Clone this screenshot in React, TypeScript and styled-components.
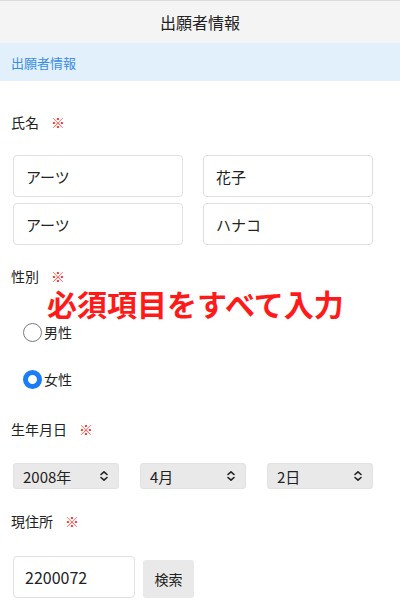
import styled, { createGlobalStyle } from 'styled-components'

// ─── Global ───────────────────────────────────────────────────────────────────

const GlobalStyle = createGlobalStyle`
  * { box-sizing: border-box; }
  body {
    margin: 0;
    background: #fff;
    font-family: "Noto Sans CJK JP", "Noto Sans", "Liberation Sans", sans-serif;
    color: #222;
  }
`

// ─── Parts ────────────────────────────────────────────────────────────────────

function Chevrons() {
  return (
    <svg width="10" height="12" viewBox="0 0 10 12" fill="none">
      <path d="M2 4.5 L5 1.8 L8 4.5" stroke="#222" strokeWidth="1.6" strokeLinecap="round" strokeLinejoin="round" />
      <path d="M2 7.5 L5 10.2 L8 7.5" stroke="#222" strokeWidth="1.6" strokeLinecap="round" strokeLinejoin="round" />
    </svg>
  )
}

function Label({ children, top }: { children: string; top: number }) {
  return (
    <FieldLabel $top={top}>
      {children}
      <Required>※</Required>
    </FieldLabel>
  )
}

// ─── Component ────────────────────────────────────────────────────────────────

export default function App() {
  return (
    <Page>
      <GlobalStyle />
      <Header>出願者情報</Header>
      <SectionBar>出願者情報</SectionBar>

      <Label top={31}>氏名</Label>
      <NameGrid>
        <TextBox>アーツ</TextBox>
        <TextBox>花子</TextBox>
        <TextBox>アーツ</TextBox>
        <TextBox>ハナコ</TextBox>
      </NameGrid>

      <GenderSection>
        <Label top={0}>性別</Label>
        <Notice>必須項目をすべて入力</Notice>
        <RadioRow $top={36}>
          <RadioMark $checked={false} />
          男性
        </RadioRow>
        <RadioRow $top={27}>
          <RadioMark $checked />
          女性
        </RadioRow>
      </GenderSection>

      <Label top={30}>生年月日</Label>
      <SelectGrid>
        <SelectBox>2008年<Chevrons /></SelectBox>
        <SelectBox>4月<Chevrons /></SelectBox>
        <SelectBox>2日<Chevrons /></SelectBox>
      </SelectGrid>

      <Label top={22}>現住所</Label>
      <PostalRow>
        <PostalBox>2200072</PostalBox>
        <SearchButton>検索</SearchButton>
      </PostalRow>
    </Page>
  )
}

// ─── Styles ───────────────────────────────────────────────────────────────────

const Page = styled.div`
  width: 400px;
  height: 600px;
  overflow: hidden;
  background: #fff;
`

const Header = styled.div`
  height: 43px;
  display: flex;
  align-items: center;
  justify-content: center;
  background: #f4f4f4;
  border-top: 1px solid #dcdcdc;
  font-size: 16px;
  color: #222;
`

const SectionBar = styled.div`
  height: 38px;
  display: flex;
  align-items: center;
  padding-left: 11px;
  background: #e2f0fc;
  color: #3a8de3;
  font-size: 13px;
`

const FieldLabel = styled.div<{ $top: number }>`
  margin-top: ${({ $top }) => $top}px;
  padding-left: 11px;
  height: 20px;
  line-height: 20px;
  font-size: 14px;
  color: #222;
  display: flex;
  align-items: center;
`

const Required = styled.span`
  color: #f01818;
  margin-left: 12px;
  font-size: 14px;
`

const NameGrid = styled.div`
  margin-top: 23px;
  padding-left: 13px;
  display: grid;
  grid-template-columns: 170px 170px;
  column-gap: 20px;
  row-gap: 6px;
`

const TextBox = styled.div`
  height: 42px;
  display: flex;
  align-items: center;
  padding-left: 12px;
  border: 1.5px solid #e0e0e0;
  border-radius: 4px;
  font-size: 15px;
  color: #222;
`

const GenderSection = styled.div`
  position: relative;
  margin-top: 21px;
`

const Notice = styled.div`
  position: absolute;
  left: 47px;
  top: 22px;
  font-size: 30px;
  line-height: 30px;
  font-weight: 700;
  color: #ff1a1a;
  white-space: nowrap;
`

const RadioRow = styled.div<{ $top: number }>`
  margin-top: ${({ $top }) => $top}px;
  padding-left: 23px;
  height: 20px;
  display: flex;
  align-items: center;
  gap: 2px;
  font-size: 14px;
  color: #222;
`

const RadioMark = styled.span<{ $checked: boolean }>`
  width: 19px;
  height: 19px;
  border-radius: 50%;
  background: #fff;
  border: ${({ $checked }) => ($checked ? '5px solid #1a7cf6' : '1.5px solid #7a7a7a')};
`

const SelectGrid = styled.div`
  margin-top: 24px;
  padding-left: 13px;
  display: grid;
  grid-template-columns: repeat(3, 106px);
  column-gap: 21px;
`

const SelectBox = styled.div`
  height: 26px;
  display: flex;
  align-items: center;
  justify-content: space-between;
  padding: 0 9px 0 9px;
  background: #e9e9e9;
  border: 1px solid #e2e2e2;
  border-radius: 3px;
  font-size: 15px;
  color: #222;
`

const PostalRow = styled.div`
  margin-top: 25px;
  padding-left: 13px;
  display: flex;
  align-items: flex-end;
  gap: 8px;
`

const PostalBox = styled.div`
  width: 122px;
  height: 42px;
  display: flex;
  align-items: center;
  padding-left: 11px;
  border: 1.5px solid #e0e0e0;
  border-radius: 4px;
  font-size: 16px;
  color: #222;
`

const SearchButton = styled.div`
  width: 51px;
  height: 38px;
  display: flex;
  align-items: center;
  justify-content: center;
  background: #e9e9e9;
  border-radius: 3px;
  font-size: 14px;
  color: #222;
`
